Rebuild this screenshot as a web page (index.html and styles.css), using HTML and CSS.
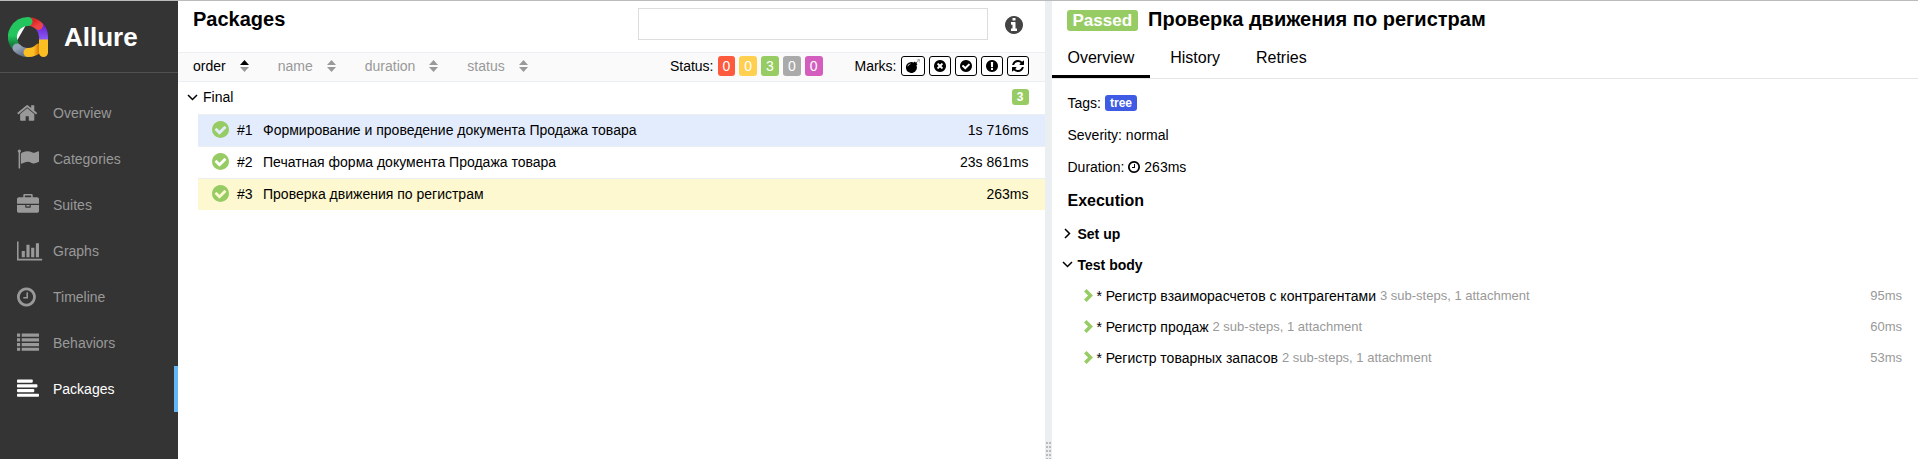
FILE: index.html
```html
<!DOCTYPE html>
<html lang="en">
<head>
<meta charset="utf-8">
<title>Allure Report</title>
<link rel="stylesheet" href="styles.css">
</head>
<body>
<svg class="sprite" aria-hidden="true">
  <symbol id="home" viewBox="64 0 1792 1792" preserveAspectRatio="xMinYMid"><path d="M1472 992v480q0 26-19 45t-45 19h-384v-384h-256v384h-384q-26 0-45-19t-19-45v-480q0-1 .5-3t.5-3l575-474 575 474q1 2 1 6zm223-69l-62 74q-8 9-21 11h-3q-13 0-21-7l-692-577-692 577q-12 8-24 7-13-2-21-11l-62-74q-8-10-7-23.500t11-21.500l719-599q32-26 76-26t76 26l244 204v-195q0-14 9-23t23-9h192q14 0 23 9t9 23v408l219 182q10 8 11 21.500t-7 23.500z"/></symbol>
  <symbol id="flag" viewBox="0 0 1792 1792" preserveAspectRatio="xMinYMid"><path d="M320 256q0 72-64 110v1266q0 13-9.500 22.500t-22.500 9.500h-64q-13 0-22.500-9.500t-9.500-22.500v-1266q-64-38-64-110 0-53 37.500-90.500t90.500-37.500 90.500 37.500 37.500 90.500zm1472 64v763q0 25-12.500 38.500t-39.500 27.500q-215 116-369 116-61 0-123.500-22t-108.500-48-115.500-48-142.500-22q-192 0-464 146-17 9-33 9-26 0-45-19t-19-45v-742q0-32 31-55 21-14 79-43 236-120 421-120 107 0 200 29t219 88q38 19 88 19 54 0 117.500-21t110-47 88-47 54.500-21q26 0 45 19t19 45z"/></symbol>
  <symbol id="briefcase" viewBox="0 0 1792 1792" preserveAspectRatio="xMinYMid"><path d="M640 256h512v-128h-512v128zm1152 640v480q0 66-47 113t-113 47h-1472q-66 0-113-47t-47-113v-480h672v160q0 26 19 45t45 19h320q26 0 45-19t19-45v-160h672zm-768 0v128h-256v-128h256zm768-480v384h-1792v-384q0-66 47-113t113-47h352v-160q0-40 28-68t68-28h576q40 0 68 28t28 68v160h352q66 0 113 47t47 113z"/></symbol>
  <symbol id="chart" viewBox="0 0 2048 1792" preserveAspectRatio="xMinYMid"><path d="M640 896v512h-256v-512h256zm384-512v1024h-256v-1024h256zm1024 1152v128h-2048v-1536h128v1408h1920zm-640-896v768h-256v-768h256zm384-384v1152h-256v-1152h256z"/></symbol>
  <symbol id="clock" viewBox="128 0 1536 1792" preserveAspectRatio="xMinYMid"><path d="M1024 544v448q0 14-9 23t-23 9h-320q-14 0-23-9t-9-23v-64q0-14 9-23t23-9h224v-352q0-14 9-23t23-9h64q14 0 23 9t9 23zm416 352q0-148-73-273t-198-198-273-73-273 73-198 198-73 273 73 273 198 198 273 73 273-73 198-198 73-273zm224 0q0 209-103 385.500t-279.500 279.500-385.500 103-385.500-103-279.500-279.500-103-385.500 103-385.500 279.500-279.500 385.500-103 385.500 103 279.500 279.500 103 385.500z"/></symbol>
  <symbol id="list" viewBox="0 0 1792 1792" preserveAspectRatio="xMinYMid"><path d="M0 128h256v256H0zM384 128h1408v256H384zM0 512h256v256H0zM384 512h1408v256H384zM0 896h256v256H0zM384 896h1408v256H384zM0 1280h256v256H0zM384 1280h1408v256H384z"/></symbol>
  <symbol id="align" viewBox="0 0 1792 1792" preserveAspectRatio="xMinYMid"><rect y="128" width="1280" height="256" rx="64"/><rect y="512" width="1664" height="256" rx="64"/><rect y="896" width="1408" height="256" rx="64"/><rect y="1280" width="1792" height="256" rx="64"/></symbol>
  <symbol id="check" viewBox="128 128 1536 1536"><path d="M1412 734q0-28-18-46l-91-90q-19-19-45-19t-45 19l-408 407-226-226q-19-19-45-19t-45 19l-91 90q-18 18-18 46 0 27 18 45l362 362q19 19 45 19 27 0 46-19l543-543q18-18 18-45zm252 162q0 209-103 385.500t-279.500 279.500-385.500 103-385.500-103-279.500-279.500-103-385.500 103-385.500 279.500-279.500 385.500-103 385.500 103 279.500 279.500 103 385.500z"/></symbol>
  <symbol id="times" viewBox="128 128 1536 1536"><path d="M1277 1122q0-26-19-45l-181-181 181-181q19-19 19-45 0-27-19-46l-90-90q-19-19-46-19-26 0-45 19l-181 181-181-181q-19-19-45-19-27 0-46 19l-90 90q-19 19-19 46 0 26 19 45l181 181-181 181q-19 19-19 45 0 27 19 46l90 90q19 19 46 19 26 0 45-19l181-181 181 181q19 19 45 19 27 0 46-19l90-90q19-19 19-46zm387-226q0 209-103 385.500t-279.500 279.500-385.500 103-385.500-103-279.500-279.500-103-385.500 103-385.500 279.500-279.500 385.500-103 385.500 103 279.500 279.500 103 385.500z"/></symbol>
  <symbol id="exclamation" viewBox="128 128 1536 1536"><path d="M896 128q209 0 385.500 103t279.500 279.500 103 385.500-103 385.500-279.500 279.500-385.500 103-385.500-103-279.500-279.500-103-385.500 103-385.500 279.500-279.500 385.500-103zm128 1247v-190q0-14-9-23.500t-22-9.500h-192q-13 0-23 10t-10 23v190q0 13 10 23t23 10h192q13 0 22-9.500t9-23.500zm-2-344l18-621q0-12-10-18-10-8-24-8h-220q-14 0-24 8-10 6-10 18l17 621q0 10 10 17.500t24 7.500h185q14 0 23.500-7.500t10.500-17.500z"/></symbol>
  <symbol id="info" viewBox="128 128 1536 1536"><path d="M1152 1376v-160q0-14-9-23t-23-9h-96v-512q0-14-9-23t-23-9h-320q-14 0-23 9t-9 23v160q0 14 9 23t23 9h96v320h-96q-14 0-23 9t-9 23v160q0 14 9 23t23 9h448q14 0 23-9t9-23zm-128-896v-160q0-14-9-23t-23-9h-192q-14 0-23 9t-9 23v160q0 14 9 23t23 9h192q14 0 23-9t9-23zm640 416q0 209-103 385.500t-279.500 279.500-385.500 103-385.500-103-279.500-279.500-103-385.500 103-385.500 279.500-279.500 385.500-103 385.500 103 279.500 279.500 103 385.500z"/></symbol>
  <symbol id="refresh" viewBox="128 128 1536 1536"><path d="M1639 1056q0 5-1 7-64 268-268 434.500t-478 166.500q-146 0-282.500-55t-243.500-157l-129 129q-19 19-45 19t-45-19-19-45v-448q0-26 19-45t45-19h448q26 0 45 19t19 45-19 45l-137 137q71 66 161 102t187 36q134 0 250-65t186-179q11-17 53-117 8-23 30-23h192q13 0 22.500 9.500t9.500 22.500zm25-800v448q0 26-19 45t-45 19h-448q-26 0-45-19t-19-45 19-45l138-138q-148-137-349-137-134 0-250 65t-186 179q-11 17-53 117-8 23-30 23h-199q-13 0-22.500-9.500t-9.500-22.500v-7q65-268 270-434.500t480-166.500q146 0 284 55.500t245 156.500l130-129q19-19 45-19t45 19 19 45z"/></symbol>
  <symbol id="bomb" viewBox="0 0 14 14"><path d="M5.500 3a5.500 5.500 0 0 1 2.300.5l1-1 1.200 1.200.6-.7.600.6-.7.700.900.900-1 1A5.500 5.500 0 1 1 5.500 3zM2 7.400c.4-1.300 1.200-2 2.600-2.500l-.2-.5C2.800 4.900 1.900 5.800 1.500 7.200z" fill-rule="evenodd"/><path d="M10.800 3.200l.9-.9M11.300.9l.5.6M13.600.4l-.9.900M12.700 2.500l.6.600M12.200 0v1M13 1.800h1" fill="none" stroke="currentColor" stroke-width=".5"/></symbol>
  <symbol id="sort" viewBox="0 0 9 12"><path class="sort-up" d="M4.500 0 9 5H0z"/><path class="sort-down" d="M0 7h9l-4.500 5z"/></symbol>
  <symbol id="angle-down" viewBox="0 0 11 7"><path d="M1 1l4.500 4.500L10 1" fill="none" stroke="currentColor" stroke-width="1.500"/></symbol>
  <symbol id="angle-right" viewBox="0 0 7 11"><path d="M1 1l4.500 4.500L1 10" fill="none" stroke="currentColor" stroke-width="1.500"/></symbol>
  <symbol id="chevron" viewBox="0 0 9 13"><path d="M1.300 1.300l5.200 5.200-5.200 5.200" fill="none" stroke="currentColor" stroke-width="3.500"/></symbol>
</svg>

<div class="app">
  <aside class="side">
    <a class="brand" href="#">
      <svg class="logo" viewBox="0 0 40 40" fill="none" stroke-width="9" stroke-linecap="round" aria-hidden="true">
        <defs>
          <linearGradient id="g-green" x1="0" y1="0" x2="0" y2="1"><stop offset=".6" stop-color="#22c55e"/><stop offset="1" stop-color="#15803d"/></linearGradient>
          <linearGradient id="g-red" x1="0" y1="0" x2="1" y2="1"><stop offset="0" stop-color="#dc2626"/><stop offset="1" stop-color="#ef4444"/></linearGradient>
          <linearGradient id="g-purple" x1="0" y1="0" x2="0" y2="1"><stop offset="0" stop-color="#6d28d9"/><stop offset="1" stop-color="#8b5cf6"/></linearGradient>
          <linearGradient id="g-slate" x1="0" y1="0" x2="1" y2="1"><stop offset="0" stop-color="#94a3b8"/><stop offset="1" stop-color="#64748b"/></linearGradient>
          <linearGradient id="g-yellow" x1="0" y1="0" x2="1" y2="0"><stop offset=".5" stop-color="#fbbf24"/><stop offset="1" stop-color="#d97706"/></linearGradient>
        </defs>
        <path d="M31.900 10A15.500 15.500 0 0 1 35.500 20v3" stroke="url(#g-purple)"/>
        <path d="M24 5A15.500 15.500 0 0 1 30.500 8.500" stroke="url(#g-red)"/>
        <path d="M6.600 27.800A15.500 15.500 0 0 1 20 4.500" stroke="url(#g-green)"/>
        <path d="M9 31A15.500 15.500 0 0 0 20 35.500" stroke="url(#g-slate)"/>
        <path d="M20 35.500A15.500 15.500 0 0 0 31 31" stroke="url(#g-yellow)"/>
        <path d="M31 22.500h9v13a4.500 4.500 0 0 1-9 0z" fill="#fbbf24" stroke="none"/>
      </svg>
      <span>Allure</span>
    </a>
    <nav class="nav">
      <a class="nav-item" href="#"><svg class="nav-icon"><use href="#home"/></svg>Overview</a>
      <a class="nav-item" href="#"><svg class="nav-icon"><use href="#flag"/></svg>Categories</a>
      <a class="nav-item" href="#"><svg class="nav-icon"><use href="#briefcase"/></svg>Suites</a>
      <a class="nav-item" href="#"><svg class="nav-icon"><use href="#chart"/></svg>Graphs</a>
      <a class="nav-item" href="#"><svg class="nav-icon"><use href="#clock"/></svg>Timeline</a>
      <a class="nav-item" href="#"><svg class="nav-icon"><use href="#list"/></svg>Behaviors</a>
      <a class="nav-item active" href="#"><svg class="nav-icon"><use href="#align"/></svg>Packages</a>
    </nav>
  </aside>

  <main class="pane">
    <header class="pane-head">
      <h1 class="title">Packages</h1>
      <input class="search" type="text" aria-label="Search">
      <button class="info" type="button" aria-label="Information"><svg><use href="#info"/></svg></button>
    </header>
    <div class="toolbar">
      <div class="sorters">
        <button class="sorter active" type="button">order<svg><use href="#sort"/></svg></button>
        <button class="sorter" type="button">name<svg><use href="#sort"/></svg></button>
        <button class="sorter" type="button">duration<svg><use href="#sort"/></svg></button>
        <button class="sorter" type="button">status<svg><use href="#sort"/></svg></button>
      </div>
      <div class="filters">
        <div class="filter">
          <span>Status:</span>
          <button class="count failed" type="button">0</button>
          <button class="count broken" type="button">0</button>
          <button class="count passed" type="button">3</button>
          <button class="count skipped" type="button">0</button>
          <button class="count unknown" type="button">0</button>
        </div>
        <div class="filter">
          <span>Marks:</span>
          <button class="mark" type="button" aria-label="Flaky"><svg class="bomb"><use href="#bomb"/></svg></button>
          <button class="mark" type="button" aria-label="New failed"><svg><use href="#times"/></svg></button>
          <button class="mark" type="button" aria-label="New passed"><svg><use href="#check"/></svg></button>
          <button class="mark" type="button" aria-label="New broken"><svg><use href="#exclamation"/></svg></button>
          <button class="mark" type="button" aria-label="Retries"><svg><use href="#refresh"/></svg></button>
        </div>
      </div>
    </div>
    <div class="group">
      <svg class="angle-down"><use href="#angle-down"/></svg>
      <span class="group-name">Final</span>
      <span class="label passed">3</span>
    </div>
    <div class="tests">
      <a class="test hovered" href="#"><svg><use href="#check"/></svg><span class="order">#1</span><span class="test-name">Формирование и проведение документа Продажа товара</span><span>1s 716ms</span></a>
      <a class="test" href="#"><svg><use href="#check"/></svg><span class="order">#2</span><span class="test-name">Печатная форма документа Продажа товара</span><span>23s 861ms</span></a>
      <a class="test selected" href="#"><svg><use href="#check"/></svg><span class="order">#3</span><span class="test-name">Проверка движения по регистрам</span><span>263ms</span></a>
    </div>
  </main>

  <div class="gutter">
    <svg class="grip" viewBox="0 0 5 17" aria-hidden="true"><path d="M0 0h2v2H0zM3 0h2v2H3zM0 4h2v2H0zM3 4h2v2H3zM0 8h2v2H0zM3 8h2v2H3zM0 12h2v2H0zM3 12h2v2H3zM0 16h2v1H0zM3 16h2v1H3z"/></svg>
  </div>

  <section class="pane">
    <header class="detail-head">
      <span class="status passed">Passed</span>
      <h2 class="title">Проверка движения по регистрам</h2>
    </header>
    <nav class="tabs">
      <a class="tab active" href="#">Overview</a>
      <a class="tab" href="#">History</a>
      <a class="tab" href="#">Retries</a>
    </nav>
    <div class="details">
      <div class="line">Tags: <span class="label tag">tree</span></div>
      <div class="line">Severity: normal</div>
      <div class="line">Duration: <svg class="clock"><use href="#clock"/></svg> 263ms</div>
      <h3 class="subtitle">Execution</h3>
      <div class="stage"><svg class="angle-right"><use href="#angle-right"/></svg>Set up</div>
      <div class="stage"><svg class="angle-down"><use href="#angle-down"/></svg>Test body</div>
      <div class="step"><svg><use href="#chevron"/></svg><span>* Регистр взаиморасчетов с контрагентами</span><span class="note">3 sub-steps, 1 attachment</span><span class="note time">95ms</span></div>
      <div class="step"><svg><use href="#chevron"/></svg><span>* Регистр продаж</span><span class="note">2 sub-steps, 1 attachment</span><span class="note time">60ms</span></div>
      <div class="step"><svg><use href="#chevron"/></svg><span>* Регистр товарных запасов</span><span class="note">2 sub-steps, 1 attachment</span><span class="note time">53ms</span></div>
    </div>
  </section>
</div>
</body>
</html>
```

FILE: styles.css
```css
* { box-sizing: border-box; }

body {
  margin: 0;
  font: 14px/20px "Liberation Sans", Arial, sans-serif;
  color: #000;
  background: #fff;
}

svg { fill: currentColor; flex: none; }
a { color: inherit; text-decoration: none; }
button { font: inherit; color: inherit; cursor: pointer; }
.sprite { position: absolute; width: 0; height: 0; }

.app {
  display: flex;
  min-height: 100vh;
  border-top: 1px solid #bbb;
}

/* Sidebar */
.side { flex: none; width: 178px; background: #343434; color: #999; }
.brand {
  display: flex;
  align-items: center;
  gap: 16px;
  height: 72px;
  padding: 0 8px;
  border-bottom: 1px solid #505050;
  color: #fff;
  font-size: 26px;
  font-weight: bold;
}
.logo { width: 40px; height: 40px; }
.nav { padding-top: 17px; }
.nav-item {
  display: grid;
  grid-template-columns: 36px 1fr;
  align-items: center;
  height: 46px;
  padding-left: 17px;
}
.nav-item.active { color: #fff; border-right: 4px solid #64b5f6; }
.nav-icon { width: 26px; height: 22px; }

/* Panes */
.pane { flex: 1; min-width: 0; }
.title { margin: 0; font-size: 20px; line-height: 24px; }
.pane-head {
  display: flex;
  align-items: flex-start;
  height: 52px;
  padding: 6px 22px 0 15px;
  border-bottom: 1px solid #eceff1;
}
.search {
  width: 350px;
  height: 32px;
  margin: 1px 17px 0 auto;
  border: 1px solid #ddd;
  background: #fff;
}
.info { margin: 9px 0 0; padding: 0; border: 0; background: none; color: #444; }
.info svg { display: block; width: 18px; height: 18px; }

.toolbar {
  display: flex;
  justify-content: space-between;
  align-items: flex-start;
  height: 29px;
  padding: 3px 16px 0 15px;
  background: #fafafa;
  border-bottom: 1px solid #eceff1;
}
.sorters { display: flex; gap: 29px; }
.sorter {
  display: flex;
  align-items: center;
  gap: 14px;
  padding: 0;
  border: 0;
  background: none;
  color: #999;
}
.sorter svg { width: 9px; height: 12px; }
.sorter.active { color: #000; }
.sorter.active svg { fill: #999; }
.sort-up { fill: currentColor; }
.filters { display: flex; gap: 32px; }
.filter { display: flex; gap: 4px; }
.count { padding: 0 5px; border: 0; border-radius: 3px; color: #fff; }
.failed { background: #fd5a3e; }
.broken { background: #ffd050; }
.passed { background: #97cc64; }
.skipped { background: #aaa; }
.unknown { background: #d35ebe; }
.tag { background: #3f5be4; }
.mark {
  display: flex;
  align-items: center;
  padding: 0 4px;
  border: 1px solid #000;
  border-radius: 3px;
  background: #fff;
}
.mark svg { width: 12px; height: 12px; }
.mark .bomb { width: 14px; height: 14px; }

.group { display: flex; align-items: center; height: 32px; padding: 0 16px 2px 9px; }
.angle-down { width: 11px; height: 7px; }
.angle-right { width: 7px; height: 11px; }
.group-name { flex: 1; padding-left: 5px; }
.label {
  padding: 0 5px;
  border-radius: 3px;
  color: #fff;
  font-size: 12px;
  font-weight: bold;
  line-height: 16px;
}
.tests { padding-left: 20px; }
.test {
  display: flex;
  align-items: center;
  height: 32px;
  padding: 0 16px 2px 14px;
  border-top: 1px solid #eceff1;
}
.test svg { width: 17px; height: 17px; color: #97cc64; }
.order { width: 34px; padding-left: 8px; }
.test-name { flex: 1; }
.hovered { background: #e3ecfd; }
.selected { background: #fdf8cf; }

.gutter {
  display: flex;
  flex-direction: column;
  justify-content: flex-end;
  align-items: center;
  width: 7px;
  background: #ebeff2;
}
.grip { width: 5px; height: 17px; color: #bbb; }

/* Test details */
.detail-head {
  display: flex;
  align-items: flex-start;
  gap: 10px;
  height: 36px;
  padding: 6px 15px 0;
}
.status {
  margin-top: 3px;
  padding: 0 6px;
  border-radius: 3px;
  color: #fff;
  font-size: 17px;
  font-weight: bold;
  line-height: 21px;
}
.tabs {
  display: flex;
  gap: 4px;
  border-bottom: 1px solid #e5e5e5;
  font-size: 16px;
}
.tab { padding: 11px 16px 7px; border-bottom: 3px solid transparent; }
.tab.active { border-color: #000; }
.details { padding: 9px 16px 9px 10px; }
.line { display: flex; align-items: center; gap: 4px; height: 32px; padding: 0 0 2px 6px; }
.clock { width: 12px; height: 14px; }
.subtitle { margin: 0; padding: 7px 6px; font-size: 16px; line-height: 20px; }
.stage {
  display: grid;
  grid-template-columns: 11px 1fr;
  gap: 5px;
  align-items: center;
  height: 31px;
  font-weight: bold;
}
.stage .angle-right { justify-self: center; }
.step { display: flex; align-items: center; gap: 4px; height: 31px; padding-left: 22px; }
.step svg { width: 9px; height: 13px; color: #97cc64; }
.note { color: #999; font-size: 13px; }
.time { margin-left: auto; }
```
